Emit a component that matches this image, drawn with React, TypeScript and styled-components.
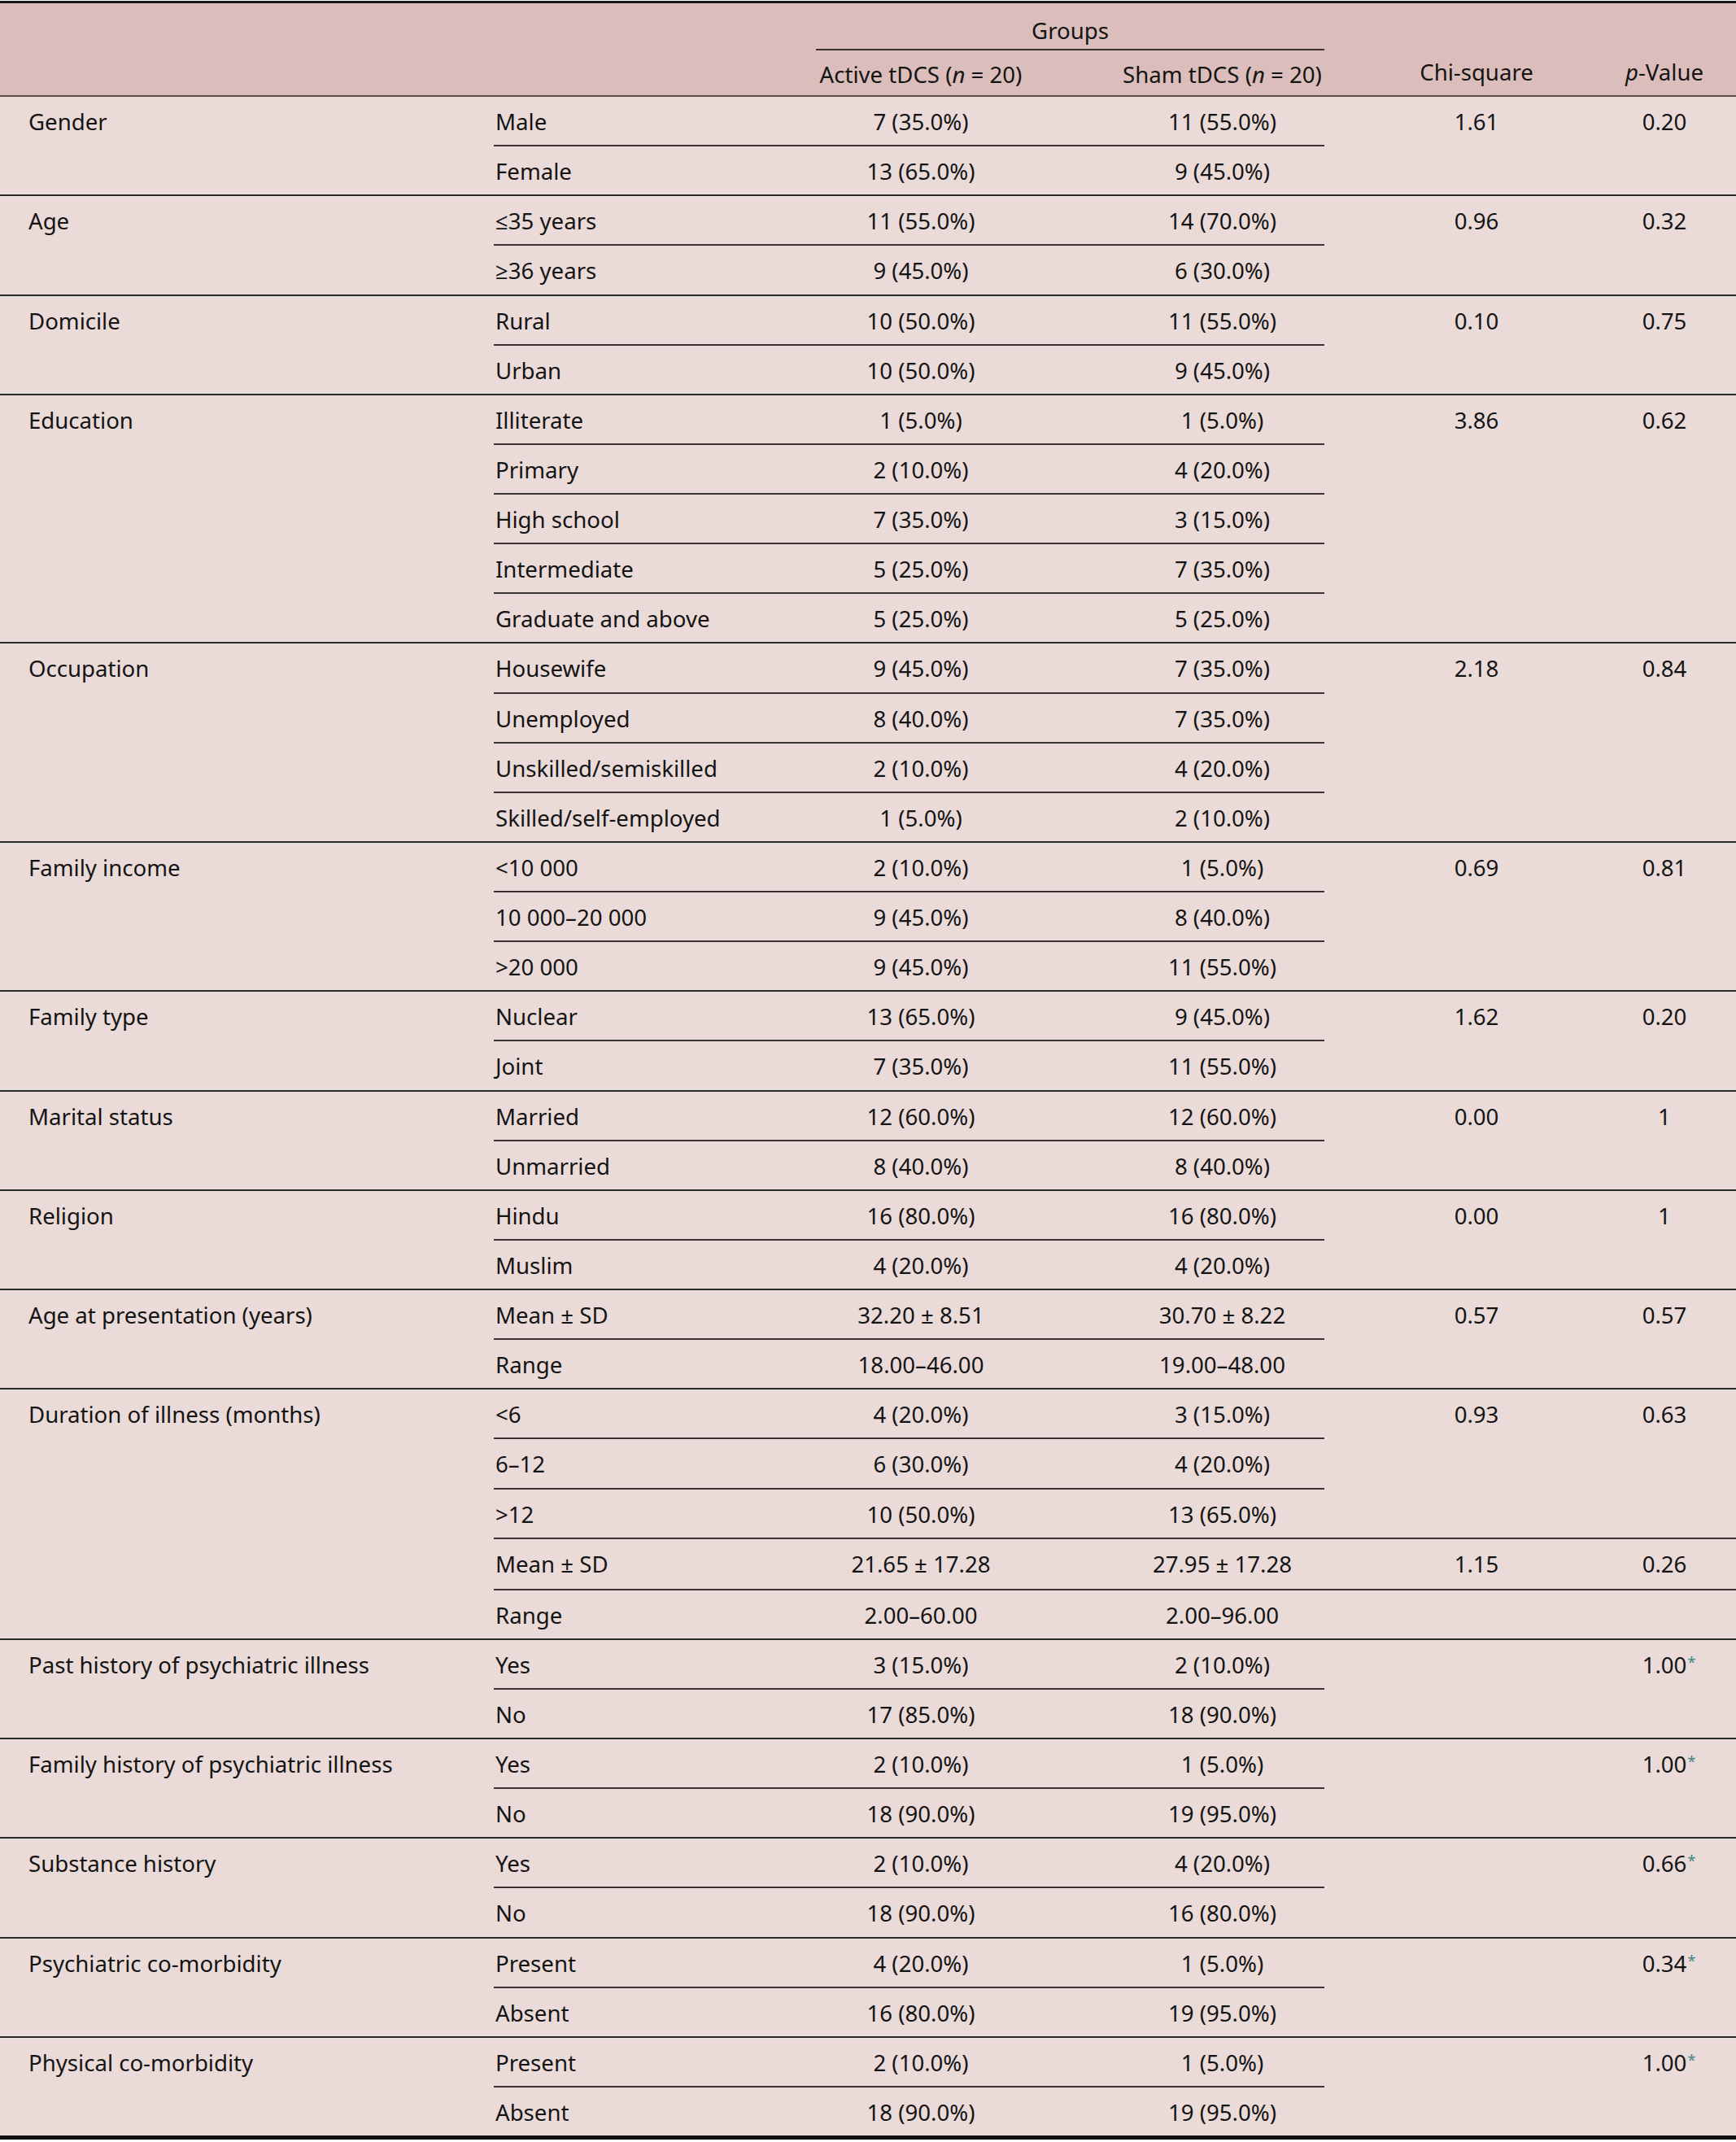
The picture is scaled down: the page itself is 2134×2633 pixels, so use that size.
import React from "react";
import styled, { createGlobalStyle } from "styled-components";

const GlobalStyle = createGlobalStyle`
  html, body {
    margin: 0;
    padding: 0;
    background: #ffffff;
  }
  body {
    font-family: "Noto Sans", "Open Sans", Arial, sans-serif;
    color: #141414;
  }
`;

const COL1 = 607;
const COL2 = 396;
const ACTIVE = 374;
const SHAM = 251;
const CHI = 372;
const PCOL = 134;
const ROW = 59.14;

const Table = styled.div`
  width: 2134px;
  margin-top: 1px;
  border-top: 3px solid #1a1a1a;
  font-size: 27.6px;
  letter-spacing: 0;
`;

const Head = styled.div`
  display: flex;
  background: #dbbdbb;
  border-bottom: 2px solid #5e4a4a;
  height: 115px;
  box-sizing: border-box;
`;

const HeadSpacer = styled.div<{ $w: number }>`
  width: ${(p) => p.$w}px;
  flex: none;
`;

const GroupHead = styled.div`
  width: ${ACTIVE + SHAM}px;
  flex: none;
  display: flex;
  flex-direction: column;
`;

const GroupTitle = styled.div`
  height: 58px;
  box-sizing: border-box;
  border-bottom: 2px solid #3a3030;
  text-align: center;
  line-height: 36px;
  padding-top: 15px;
`;

const HeadRow = styled.div`
  display: flex;
  flex: 1;
  padding-top: 3px;
`;

const HeadCell = styled.div<{ $w: number; $pl?: number; $pr?: number; $bottom?: boolean }>`
  width: ${(p) => p.$w}px;
  flex: none;
  box-sizing: border-box;
  padding-left: ${(p) => p.$pl ?? 0}px;
  padding-right: ${(p) => p.$pr ?? 0}px;
  text-align: center;
  display: flex;
  align-items: ${(p) => (p.$bottom ? "flex-end" : "center")};
  justify-content: center;
  padding-bottom: ${(p) => (p.$bottom ? 10 : 0)}px;
  white-space: nowrap;
`;

const Body = styled.div`
  background: #ebdbd8;
`;

const Group = styled.div<{ $last?: boolean }>`
  display: flex;
  border-bottom: ${(p) => (p.$last ? "5px solid #111" : "2px solid #2a2a2a")};
`;

const Label = styled.div`
  width: ${COL1}px;
  flex: none;
  box-sizing: border-box;
  padding-left: 35px;
  line-height: 61px;
  white-space: nowrap;
`;

const Blocks = styled.div`
  flex: 1;
  display: flex;
  flex-direction: column;
`;

const Block = styled.div<{ $divided?: boolean }>`
  display: flex;
  border-bottom: ${(p) => (p.$divided ? "2px solid #3a3434" : "none")};
`;

const SubRows = styled.div`
  width: ${COL2 + ACTIVE + SHAM}px;
  flex: none;
  display: flex;
  flex-direction: column;
`;

const SubRow = styled.div<{ $divided?: boolean }>`
  display: grid;
  grid-template-columns: ${COL2}px ${ACTIVE}px ${SHAM}px;
  grid-template-rows: ${ROW}px;
  height: ${(p) => (p.$divided ? ROW + 2 : ROW)}px;
  box-sizing: border-box;
  border-bottom: ${(p) => (p.$divided ? "2px solid #3a3434" : "none")};
  line-height: 61px;
`;

const SubLabel = styled.div`
  padding-left: 2px;
  white-space: nowrap;
`;

const Value = styled.div<{ $pr?: number }>`
  text-align: center;
  padding-right: ${(p) => p.$pr ?? 0}px;
  white-space: nowrap;
`;

const StatCell = styled.div<{ $w: number; $pl?: number; $pr?: number }>`
  width: ${(p) => p.$w}px;
  flex: none;
  box-sizing: border-box;
  padding-left: ${(p) => p.$pl ?? 0}px;
  padding-right: ${(p) => p.$pr ?? 0}px;
  text-align: center;
  line-height: 61px;
  white-space: nowrap;
`;

const Marked = styled.span`
  position: relative;
  display: inline-block;
`;

const Star = styled.span`
  position: absolute;
  left: calc(100% + 1px);
  top: 18px;
  font-size: 18px;
  line-height: 1;
  color: #3a8584;
`;

const Ital = styled.i`
  font-style: italic;
`;

type Row = [string, string, string];
type BlockData = { rows: Row[]; chi?: string; p?: string; star?: boolean };
type GroupData = { label: string; blocks: BlockData[] };

const groups: GroupData[] = [
  {
    label: "Gender",
    blocks: [
      {
        rows: [
          ["Male", "7 (35.0%)", "11 (55.0%)"],
          ["Female", "13 (65.0%)", "9 (45.0%)"],
        ],
        chi: "1.61",
        p: "0.20",
      },
    ],
  },
  {
    label: "Age",
    blocks: [
      {
        rows: [
          ["≤35 years", "11 (55.0%)", "14 (70.0%)"],
          ["≥36 years", "9 (45.0%)", "6 (30.0%)"],
        ],
        chi: "0.96",
        p: "0.32",
      },
    ],
  },
  {
    label: "Domicile",
    blocks: [
      {
        rows: [
          ["Rural", "10 (50.0%)", "11 (55.0%)"],
          ["Urban", "10 (50.0%)", "9 (45.0%)"],
        ],
        chi: "0.10",
        p: "0.75",
      },
    ],
  },
  {
    label: "Education",
    blocks: [
      {
        rows: [
          ["Illiterate", "1 (5.0%)", "1 (5.0%)"],
          ["Primary", "2 (10.0%)", "4 (20.0%)"],
          ["High school", "7 (35.0%)", "3 (15.0%)"],
          ["Intermediate", "5 (25.0%)", "7 (35.0%)"],
          ["Graduate and above", "5 (25.0%)", "5 (25.0%)"],
        ],
        chi: "3.86",
        p: "0.62",
      },
    ],
  },
  {
    label: "Occupation",
    blocks: [
      {
        rows: [
          ["Housewife", "9 (45.0%)", "7 (35.0%)"],
          ["Unemployed", "8 (40.0%)", "7 (35.0%)"],
          ["Unskilled/semiskilled", "2 (10.0%)", "4 (20.0%)"],
          ["Skilled/self-employed", "1 (5.0%)", "2 (10.0%)"],
        ],
        chi: "2.18",
        p: "0.84",
      },
    ],
  },
  {
    label: "Family income",
    blocks: [
      {
        rows: [
          ["<10 000", "2 (10.0%)", "1 (5.0%)"],
          ["10 000–20 000", "9 (45.0%)", "8 (40.0%)"],
          [">20 000", "9 (45.0%)", "11 (55.0%)"],
        ],
        chi: "0.69",
        p: "0.81",
      },
    ],
  },
  {
    label: "Family type",
    blocks: [
      {
        rows: [
          ["Nuclear", "13 (65.0%)", "9 (45.0%)"],
          ["Joint", "7 (35.0%)", "11 (55.0%)"],
        ],
        chi: "1.62",
        p: "0.20",
      },
    ],
  },
  {
    label: "Marital status",
    blocks: [
      {
        rows: [
          ["Married", "12 (60.0%)", "12 (60.0%)"],
          ["Unmarried", "8 (40.0%)", "8 (40.0%)"],
        ],
        chi: "0.00",
        p: "1",
      },
    ],
  },
  {
    label: "Religion",
    blocks: [
      {
        rows: [
          ["Hindu", "16 (80.0%)", "16 (80.0%)"],
          ["Muslim", "4 (20.0%)", "4 (20.0%)"],
        ],
        chi: "0.00",
        p: "1",
      },
    ],
  },
  {
    label: "Age at presentation (years)",
    blocks: [
      {
        rows: [
          ["Mean ± SD", "32.20 ± 8.51", "30.70 ± 8.22"],
          ["Range", "18.00–46.00", "19.00–48.00"],
        ],
        chi: "0.57",
        p: "0.57",
      },
    ],
  },
  {
    label: "Duration of illness (months)",
    blocks: [
      {
        rows: [
          ["<6", "4 (20.0%)", "3 (15.0%)"],
          ["6–12", "6 (30.0%)", "4 (20.0%)"],
          [">12", "10 (50.0%)", "13 (65.0%)"],
        ],
        chi: "0.93",
        p: "0.63",
      },
      {
        rows: [["Mean ± SD", "21.65 ± 17.28", "27.95 ± 17.28"]],
        chi: "1.15",
        p: "0.26",
      },
      {
        rows: [["Range", "2.00–60.00", "2.00–96.00"]],
      },
    ],
  },
  {
    label: "Past history of psychiatric illness",
    blocks: [
      {
        rows: [
          ["Yes", "3 (15.0%)", "2 (10.0%)"],
          ["No", "17 (85.0%)", "18 (90.0%)"],
        ],
        p: "1.00",
        star: true,
      },
    ],
  },
  {
    label: "Family history of psychiatric illness",
    blocks: [
      {
        rows: [
          ["Yes", "2 (10.0%)", "1 (5.0%)"],
          ["No", "18 (90.0%)", "19 (95.0%)"],
        ],
        p: "1.00",
        star: true,
      },
    ],
  },
  {
    label: "Substance history",
    blocks: [
      {
        rows: [
          ["Yes", "2 (10.0%)", "4 (20.0%)"],
          ["No", "18 (90.0%)", "16 (80.0%)"],
        ],
        p: "0.66",
        star: true,
      },
    ],
  },
  {
    label: "Psychiatric co-morbidity",
    blocks: [
      {
        rows: [
          ["Present", "4 (20.0%)", "1 (5.0%)"],
          ["Absent", "16 (80.0%)", "19 (95.0%)"],
        ],
        p: "0.34",
        star: true,
      },
    ],
  },
  {
    label: "Physical co-morbidity",
    blocks: [
      {
        rows: [
          ["Present", "2 (10.0%)", "1 (5.0%)"],
          ["Absent", "18 (90.0%)", "19 (95.0%)"],
        ],
        p: "1.00",
        star: true,
      },
    ],
  },
];

function StatBlock({ b, divided }: { b: BlockData; divided: boolean }) {
  return (
    <Block $divided={divided}>
      <SubRows>
        {b.rows.map((r, i) => (
          <SubRow key={i} $divided={i < b.rows.length - 1}>
            <SubLabel>{r[0]}</SubLabel>
            <Value $pr={116}>{r[1]}</Value>
            <Value>{r[2]}</Value>
          </SubRow>
        ))}
      </SubRows>
      <StatCell $w={CHI} $pl={116} $pr={114}>
        {b.chi ?? ""}
      </StatCell>
      <StatCell $w={PCOL} $pr={42}>
        {b.p ? (
          b.star ? (
            <Marked>
              {b.p}
              <Star>*</Star>
            </Marked>
          ) : (
            b.p
          )
        ) : (
          ""
        )}
      </StatCell>
    </Block>
  );
}

export default function App() {
  return (
    <>
      <GlobalStyle />
      <Table>
        <Head>
          <HeadSpacer $w={COL1} />
          <HeadSpacer $w={COL2} />
          <GroupHead>
            <GroupTitle>Groups</GroupTitle>
            <HeadRow>
              <HeadCell $w={ACTIVE} $pr={116}>
                Active tDCS (<Ital>n</Ital>&nbsp;=&nbsp;20)
              </HeadCell>
              <HeadCell $w={SHAM}>
                Sham tDCS (<Ital>n</Ital>&nbsp;=&nbsp;20)
              </HeadCell>
            </HeadRow>
          </GroupHead>
          <HeadCell $w={CHI} $pl={116} $pr={114} $bottom>
            Chi-square
          </HeadCell>
          <HeadCell $w={PCOL} $pr={42} $bottom>
            <span>
              <Ital>p</Ital>-Value
            </span>
          </HeadCell>
        </Head>
        <Body>
          {groups.map((g, gi) => (
            <Group key={g.label} $last={gi === groups.length - 1}>
              <Label>{g.label}</Label>
              <Blocks>
                {g.blocks.map((b, bi) => (
                  <StatBlock key={bi} b={b} divided={bi < g.blocks.length - 1} />
                ))}
              </Blocks>
            </Group>
          ))}
        </Body>
      </Table>
    </>
  );
}
